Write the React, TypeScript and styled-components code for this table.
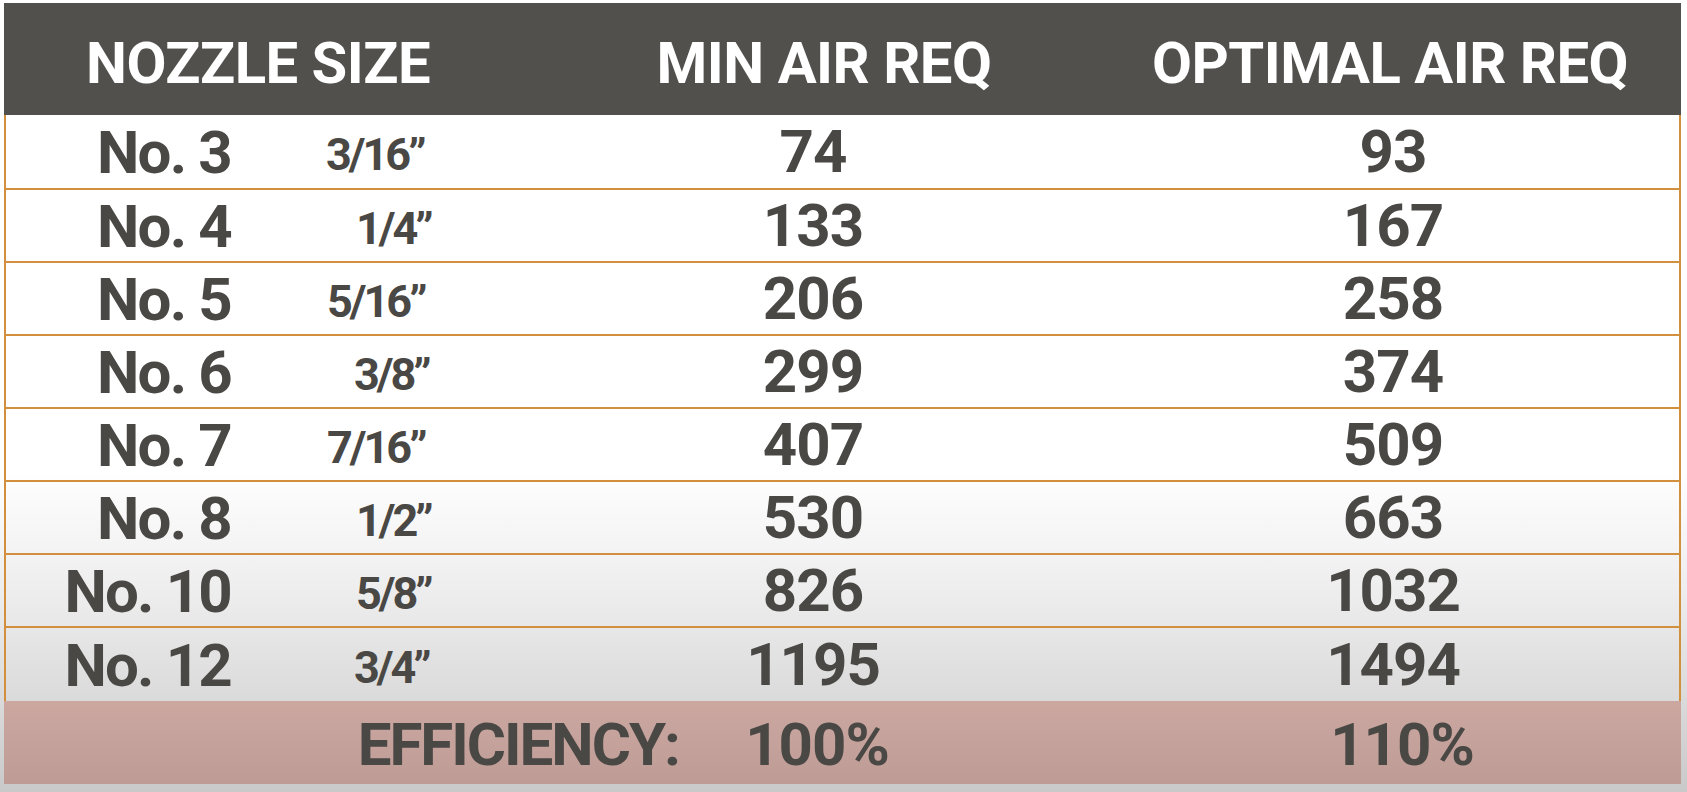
import React from 'react'
import styled, { createGlobalStyle } from 'styled-components'

const GlobalStyle = createGlobalStyle`
    html, body {
        margin: 0;
        padding: 0;
        height: 792px;
        overflow: hidden;
    }
    body {
        font-family: Roboto, 'Liberation Sans', sans-serif;
        background: linear-gradient(to bottom, #ffffff 0, #ffffff 470px, #ececec 600px, #dcdcdc 690px, #c9c9c9 792px);
    }
`

const ORANGE = '#d2903e'
const INK = '#4a4845'

interface IRow {
    no: string
    frac: string
    indent: number
    min: number
    opt: number
}

const rows: IRow[] = [
    { no: 'No. 3', frac: '3/16”', indent: 95, min: 74, opt: 93 },
    { no: 'No. 4', frac: '1/4”', indent: 125, min: 133, opt: 167 },
    { no: 'No. 5', frac: '5/16”', indent: 96, min: 206, opt: 258 },
    { no: 'No. 6', frac: '3/8”', indent: 123, min: 299, opt: 374 },
    { no: 'No. 7', frac: '7/16”', indent: 96, min: 407, opt: 509 },
    { no: 'No. 8', frac: '1/2”', indent: 125, min: 530, opt: 663 },
    { no: 'No. 10', frac: '5/8”', indent: 125, min: 826, opt: 1032 },
    { no: 'No. 12', frac: '3/4”', indent: 123, min: 1195, opt: 1494 }
]

const Page = styled.div`
    padding: 3px 0 0 4px;
    width: 1677px;
`

const Header = styled.div`
    display: grid;
    grid-template-columns: 515px 588px 574px;
    height: 112px;
    align-items: center;
    background: #52504c;
    color: #ffffff;
    font-size: 58px;
    font-weight: 700;
    line-height: 1;
    letter-spacing: -0.5px;
`

const HeadCell = styled.div<{ $align: 'left' | 'center'; $pad?: string }>`
    text-align: ${p => p.$align};
    padding: ${p => p.$pad || '0'};
    padding-top: 8px;
    white-space: nowrap;
`

const Row = styled.div<{ $tall?: boolean; $last?: boolean }>`
    display: grid;
    grid-template-columns: 513px 588px 572px;
    align-items: center;
    height: ${p => (p.$tall ? 75 : 73)}px;
    box-sizing: border-box;
    border-left: 2px solid ${ORANGE};
    border-right: 2px solid ${ORANGE};
    border-bottom: ${p => (p.$last ? 'none' : `2px solid ${ORANGE}`)};
    color: ${INK};
    font-weight: 700;
    line-height: 1;
`

const SizeCell = styled.div`
    display: flex;
    align-items: center;
    padding-top: 2px;
`

const NoLabel = styled.span`
    width: 225px;
    text-align: right;
    font-size: 60px;
    letter-spacing: -1.8px;
    white-space: nowrap;
`

const Frac = styled.span<{ $indent: number }>`
    margin-left: ${p => p.$indent}px;
    padding-top: 4px;
    font-size: 45px;
    letter-spacing: -3px;
    white-space: nowrap;
`

const Value = styled.div<{ $shift?: number }>`
    text-align: center;
    font-size: 60px;
    letter-spacing: -1px;
    padding-left: ${p => (p.$shift && p.$shift > 0 ? p.$shift : 0)}px;
    padding-right: ${p => (p.$shift && p.$shift < 0 ? -p.$shift : 0)}px;
`

const Efficiency = styled.div`
    display: grid;
    grid-template-columns: 675px 276px 1fr;
    align-items: center;
    height: 83px;
    padding-top: 5px;
    box-sizing: border-box;
    background: linear-gradient(to bottom, #cba7a0, #be9c96);
    color: ${INK};
    font-size: 60px;
    font-weight: 700;
    line-height: 1;
`

const EffLabel = styled.div`
    text-align: right;
    letter-spacing: -2px;
    white-space: nowrap;
`

const TableRow = ({ row, index }: { row: IRow; index: number }) =>
    <Row $tall={ index === 0 } $last={ index === rows.length - 1 }>
        <SizeCell>
            <NoLabel>{ row.no }</NoLabel>
            <Frac $indent={ row.indent }>{ row.frac }</Frac>
        </SizeCell>
        <Value>{ row.min }</Value>
        <Value>{ row.opt }</Value>
    </Row>

const App = () =>
    <Page>
        <GlobalStyle />
        <Header>
            <HeadCell $align='left' $pad='0 0 0 82px'>NOZZLE SIZE</HeadCell>
            <HeadCell $align='center' $pad='0 0 0 22px'>MIN AIR REQ</HeadCell>
            <HeadCell $align='center' $pad='0 8px 0 0'>OPTIMAL AIR REQ</HeadCell>
        </Header>
        { rows.map((r, i) => <TableRow key={ r.no } row={ r } index={ i } />) }
        <Efficiency>
            <EffLabel>EFFICIENCY:</EffLabel>
            <Value>100%</Value>
            <Value $shift={ 168 }>110%</Value>
        </Efficiency>
    </Page>

export default App
